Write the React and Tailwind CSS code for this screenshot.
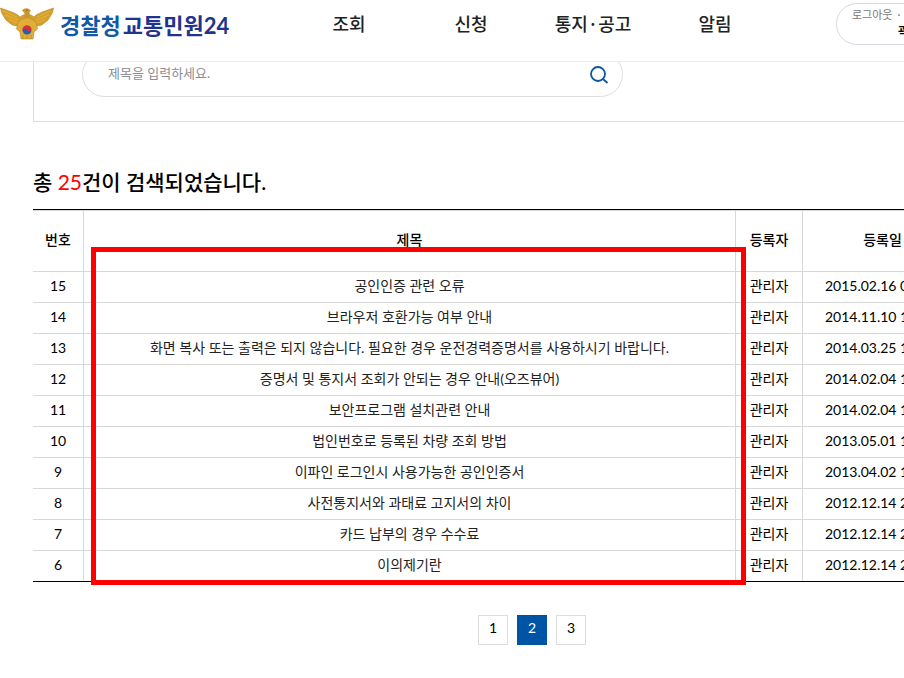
import React, { useState } from 'react';

const menus = ['조회', '신청', '통지·공고', '알림'];

const posts = [
  { no: 15, title: '공인인증 관련 오류', date: '2015.02.16 09:20' },
  { no: 14, title: '브라우저 호환가능 여부 안내', date: '2014.11.10 11:15' },
  { no: 13, title: '화면 복사 또는 출력은 되지 않습니다. 필요한 경우 운전경력증명서를 사용하시기 바랍니다.', date: '2014.03.25 15:32' },
  { no: 12, title: '증명서 및 통지서 조회가 안되는 경우 안내(오즈뷰어)', date: '2014.02.04 15:30' },
  { no: 11, title: '보안프로그램 설치관련 안내', date: '2014.02.04 15:24' },
  { no: 10, title: '법인번호로 등록된 차량 조회 방법', date: '2013.05.01 11:02' },
  { no: 9, title: '이파인 로그인시 사용가능한 공인인증서', date: '2013.04.02 16:05' },
  { no: 8, title: '사전통지서와 과태료 고지서의 차이', date: '2012.12.14 20:34' },
  { no: 7, title: '카드 납부의 경우 수수료', date: '2012.12.14 20:33' },
  { no: 6, title: '이의제기란', date: '2012.12.14 20:32' },
];

function Emblem() {
  return (
    <svg width="54" height="34" viewBox="0 0 54 34" aria-hidden="true">
      {/* wings */}
      <path
        d="M0.5 1 L13 5.5 Q18 7.5 20 10 L23 8 H31 L34 10 Q36 7.5 41 5.5 L53.5 1 Q53 6 50.5 9 Q49 13 45 15.5 Q42 19 36 19 H18 Q12 19 9 15.5 Q5 13 3.5 9 Q1 6 0.5 1 Z"
        fill="#d6a02a"
        stroke="#b5852b"
        strokeWidth="0.6"
      />
      <path
        d="M3 4 L17 10 M5 8 L18 13 M9 12.5 L18 16 M51 4 L37 10 M49 8 L36 13 M45 12.5 L36 16"
        stroke="#e6b843"
        strokeWidth="0.8"
        fill="none"
      />
      {/* head */}
      <path d="M22 3.5 Q24 0.8 28 1.4 L31 3.4 L29.5 5 L30 10 H24 L24.5 6 Z" fill="#cb9528" />
      <circle cx="27" cy="3.3" r="0.6" fill="#7a5517" />
      {/* body and tail */}
      <path
        d="M18 15 L22 12 L27 10.5 L32 12 L36 15 L37.5 22 L34 25 L33 32 H21 L20 25 L16.5 22 Z"
        fill="#e0ae36"
        stroke="#b5852b"
        strokeWidth="0.6"
      />
      <path d="M23 28 V32 M27 28.5 V32 M31 28 V32" stroke="#b5852b" strokeWidth="0.6" />
      <circle cx="27" cy="23" r="4.5" fill="#2461ae" />
      <path d="M22.7 24.4 A4.5 4.5 0 0 1 31.3 21.6 A2.3 2.3 0 0 1 27 23 A2.3 2.3 0 0 0 22.7 24.4 Z" fill="#e02b38" />
    </svg>
  );
}

function Header() {
  return (
    <header className="sticky top-0 z-10 flex h-[62px] items-start overflow-hidden border-b border-[#ececec] bg-white">
      <a href="#" className="flex w-[288px] shrink-0 gap-[6px] pt-[7px]">
        <Emblem />
        <span className="flex gap-[2px] whitespace-nowrap text-[22px] font-bold leading-[38px] text-[#1f3390]">
          <span className="text-[#0f59a6]">경찰청</span>
          <span>교통민원24</span>
        </span>
      </a>
      <nav className="flex shrink-0 font-['Noto_Sans_CJK_KR',sans-serif]">
        {menus.map((menu) => (
          <a key={menu} href="#" className="w-[122px] text-center text-lg font-medium leading-[46px] text-[#222]">
            {menu}
          </a>
        ))}
      </nav>
      <div className="-mr-24 ml-auto mt-[3px] h-[42px] w-[164px] shrink-0 rounded-full border border-[#d8d8e6] pl-[15px] pt-1 whitespace-nowrap">
        <div className="flex items-center gap-[5px] text-[11px] leading-[14px] text-[#777]">
          <button type="button">로그아웃</button>
          <span>·</span>
          <button type="button" className="text-[#e8731c]">연장</button>
        </div>
        <p className="pl-[46px] text-xs font-bold leading-5">곽</p>
      </div>
    </header>
  );
}

function SearchBox() {
  return (
    <form className="-mt-8 border border-[#ddd] pb-6 pl-12 pt-[21px]" onSubmit={(e) => e.preventDefault()}>
      <div className="flex h-[45px] w-[541px] items-center rounded-full border border-[#ddd] pl-[25px] pr-[13px]">
        <input
          type="text"
          aria-label="제목"
          placeholder="제목을 입력하세요."
          className="min-w-0 flex-1 pb-1 text-[13px] leading-5 outline-none placeholder:text-[#8b8d94]"
        />
        <button type="submit" aria-label="검색">
          <svg width="20" height="20" viewBox="0 0 20 20" fill="none" stroke="#0b57a4" strokeWidth="1.8">
            <circle cx="9" cy="9" r="7" />
            <path d="M14 14 L18.5 18" />
          </svg>
        </button>
      </div>
    </form>
  );
}

function PostTable() {
  const th = 'h-[62px] border-t border-b border-[#d8d8d8] pb-[2px] font-medium';
  const td = 'h-[31px] border-b border-[#d8d8d8] pb-[2px] group-last:h-[30px] group-last:border-b-0';
  return (
    <div className="relative mt-3 border-y border-black">
      <table className="w-full table-fixed border-separate border-spacing-0 text-center text-sm leading-5 whitespace-nowrap text-black">
        <colgroup>
          <col className="w-[51px]" />
          <col />
          <col className="w-[67px]" />
          <col className="w-[160px]" />
          <col className="w-[68px]" />
        </colgroup>
        <thead>
          <tr>
            <th className={`${th} border-r`}>번호</th>
            <th className={`${th} border-r`}>제목</th>
            <th className={`${th} border-r`}>등록자</th>
            <th className={`${th} border-r`}>등록일</th>
            <th className={th}>조회</th>
          </tr>
        </thead>
        <tbody>
          {posts.map((post) => (
            <tr key={post.no} className="group">
              <td className={`${td} border-r`}>{post.no}</td>
              <td className={`${td} border-r`}>
                <a href="#" className="text-[#222]">{post.title}</a>
              </td>
              <td className={`${td} border-r`}>관리자</td>
              <td className={`${td} border-r pr-1`}>{post.date}</td>
              <td className={td}></td>
            </tr>
          ))}
        </tbody>
      </table>
      {/* highlight around the title column */}
      <div className="pointer-events-none absolute -bottom-1 left-[58px] right-[285px] top-[37px] border-[5px] border-[#fe0000]" />
    </div>
  );
}

function Pagination() {
  const [page, setPage] = useState(2);
  return (
    <nav className="mt-[33px] flex justify-center gap-[9px]" aria-label="페이지">
      {[1, 2, 3].map((n) => (
        <button
          key={n}
          type="button"
          onClick={() => setPage(n)}
          className={`h-[30px] w-[30px] border pb-1 text-sm leading-5 ${
            page === n ? 'border-[#0054a6] bg-[#0054a6] text-white' : 'border-[#ddd] bg-white text-black'
          }`}
        >
          {n}
        </button>
      ))}
    </nav>
  );
}

export default function App() {
  return (
    <div className="min-h-screen overflow-hidden bg-white font-[Lato,'Noto_Sans_CJK_KR',sans-serif]">
      <Header />
      <main className="-mr-[127px] ml-[33px] pb-8">
        <SearchBox />
        <h2 className="mt-[45px] text-[21px] font-medium leading-[30px] text-black">
          총 <span className="font-normal text-[#fe0000]">25</span>건이 검색되었습니다.
        </h2>
        <PostTable />
        <Pagination />
      </main>
    </div>
  );
}
